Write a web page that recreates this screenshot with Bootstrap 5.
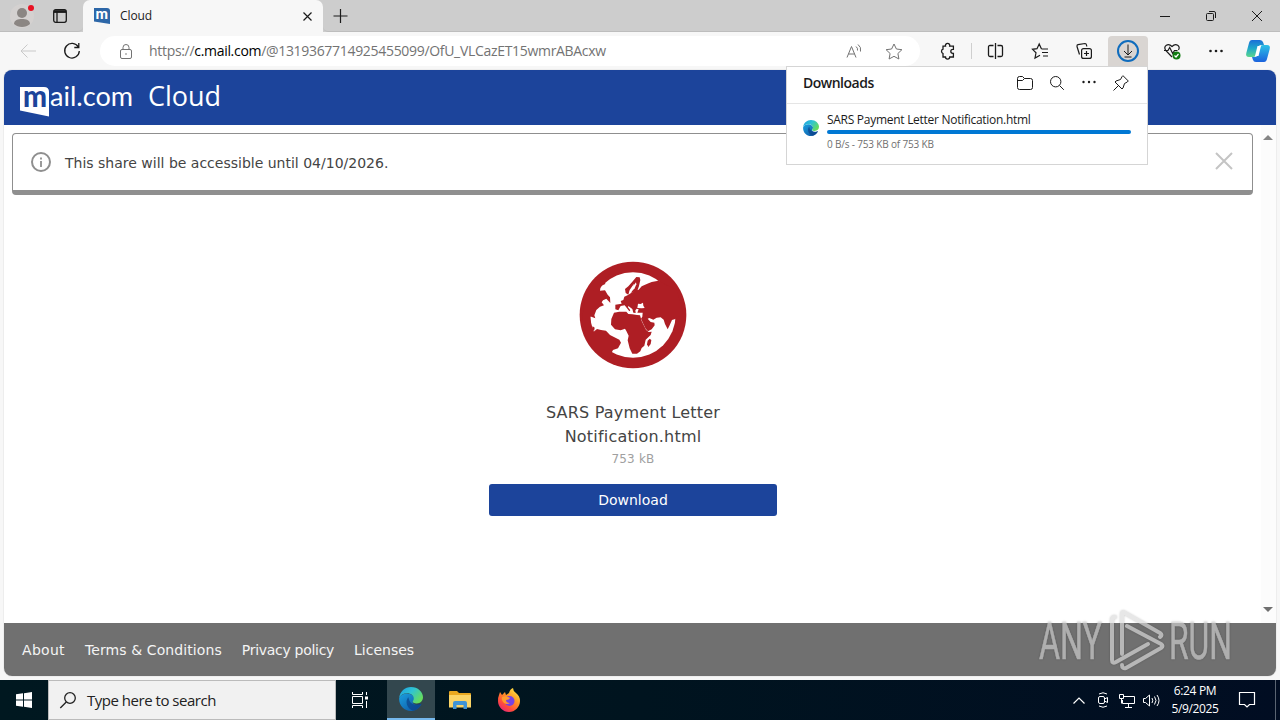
<!DOCTYPE html>
<html lang="en">
<head>
  <meta charset="UTF-8">
  <title>Cloud</title>
  <link href="https://cdn.jsdelivr.net/npm/bootstrap@5.3.0/dist/css/bootstrap.min.css" rel="stylesheet">
  <style>
    body { width: 1280px; height: 720px; overflow: hidden; background: #f7f7f7; color: #1b1b1b; font-family: "Open Sans", "Noto Sans", sans-serif; font-size: 12px; line-height: 16px; }
    svg { display: block; flex: none; overflow: visible; fill: none; stroke: currentColor; }
    .cell { display: flex; align-items: center; justify-content: center; flex: none; }

    .tab-strip { height: 32px; background: #cdcdcd; }
    .tab-left { width: 83px; border-bottom-right-radius: 5px; border-bottom: 1px solid #bdbdbd; }
    .profile { width: 44px; }
    .tab-menu { width: 32px; }
    .tab-active { width: 240px; background: #f7f7f7; border-radius: 7px 7px 0 0; padding: 0 11px; }
    .tab-name { margin-left: 10px; letter-spacing: -.1px; }
    .tab-right { border-bottom: 1px solid #bdbdbd; border-bottom-left-radius: 5px; }
    .w-btn { width: 46px; }

    .toolbar { height: 38px; }
    .t-btn { width: 48px; height: 30px; margin-right: 4px; }
    .t-back { width: 40px; margin: 0 0 0 8px; color: #c9c9c9; }
    .address { width: 820px; height: 30px; border-radius: 15px; background: #fff; color: #737373; font-size: 14px; }
    .address b { font-weight: 400; color: #000; }
    .url { letter-spacing: -.31px; margin-left: 17px; }
    .lock { margin-left: 20px; }
    .a-btn { width: 40px; }
    .a-star { margin-right: 6px; }
    .t-icons { margin-left: 8px; }
    .t-icon { width: 40px; height: 30px; margin-right: 4px; border-radius: 4px 4px 0 0; }
    .t-sep { width: 1px; height: 16px; background: #cfcfcf; margin: 0 4px 0 -1px; }
    .t-on { background: #d9d5d2; }
    .copilot { width: 36px; }

    .page-view { width: 1272px; height: 606px; margin-left: 4px; border-radius: 8px; background: #fff; overflow: hidden; font-family: "DejaVu Sans", sans-serif; box-shadow: 0 0 1px #999; }
    .mail-head { height: 55px; background: #1c449b; color: #fff; padding-left: 16px; }
    .mail-title { font: 27px/34px "Open Sans", sans-serif; margin-left: 15px; margin-top: -3px; }
    .share-note { width: 1241px; height: 62px; margin: 8px 0 0 8px; border: 1px solid #8f8f8f; border-bottom-width: 5px; border-radius: 4px; padding: 0 19px 0 18px; font-size: 14px; color: #444; }
    .note-text { margin-left: 14px; padding-top: 2px; }
    .file-box { width: 288px; margin: 66px 0 0 485px; }
    .file-name { font-size: 16px; line-height: 24px; color: #444; margin-top: 32px; letter-spacing: .2px; }
    .file-size { font-size: 12px; line-height: 21px; color: #a0a0a0; letter-spacing: .2px; }
    .btn-dl { height: 32px; margin-top: 14px; padding: 0; border-radius: 3px; background: #1c449b; color: #fff; font-size: 14px; line-height: 32px; }
    .scroller { width: 15px; background: #fcfcfc; padding: 10px 1px 11px 0; }
    .mail-foot { height: 53px; background: #707070; color: #f4f4f4; font-size: 14px; padding-left: 18px; gap: 20px; }
    .f-about { letter-spacing: .3px; }
    .f-wide { letter-spacing: .1px; }
    .f-tight { letter-spacing: -.3px; }

    .dl-panel { position: absolute; left: 786px; top: 66px; width: 362px; height: 99px; background: #fff; border: 1px solid #d5d5d5; }
    .dl-head { height: 37px; padding: 0 10px 4px 16px; border-bottom: 1px solid #e5e5e5; }
    .dl-title { font-size: 14px; font-weight: 600; letter-spacing: -.5px; }
    .dl-btn { width: 32px; }
    .dl-item { padding: 8px 16px 0; gap: 8px; }
    .dl-logo { margin-top: 8px; }
    .dl-name { letter-spacing: -.28px; }
    .dl-bar { height: 4px; border-radius: 2px; background: #0078d4; margin-top: 2px; }
    .dl-speed { font-size: 10px; color: #707070; margin-top: 2px; letter-spacing: -.17px; }
    .watermark { position: absolute; left: 1036px; top: 606px; opacity: .66; filter: drop-shadow(0 0 1px rgba(0, 0, 0, .3)); }

    .task-row { height: 40px; margin-top: 4px; background: linear-gradient(90deg, #001820, #00141f 50%, #010d22); color: #fff; }
    .task-btn { width: 48px; height: 40px; }
    .search-box { width: 288px; height: 40px; background: #f1f1f1; border: 1px solid #bbb; color: #222; font-size: 15px; padding-left: 11px; gap: 11px; letter-spacing: -.48px; }
    .edge-on { background: #33474e; border-bottom: 2px solid #76b9ed; margin: 0 1px 0 3px; }
    .tray { width: 24px; }
    .clock { width: 64px; line-height: 18px; letter-spacing: -.35px; }
    .notify { width: 40px; }
    .peek { width: 5px; border-left: 1px solid #5a6472; height: 40px; }
  </style>
</head>
<body>
  <svg width="0" height="0" class="position-absolute">
    <defs>
      <linearGradient id="gBlue" x1="0" y1="0" x2="1" y2="1"><stop offset="0" stop-color="#1ba0e0"/><stop offset="1" stop-color="#0c4f9e"/></linearGradient>
      <linearGradient id="gGreen" x1="0" y1="0" x2="1" y2=".6"><stop offset="0" stop-color="#1b9de2"/><stop offset=".5" stop-color="#2fc3d4"/><stop offset="1" stop-color="#66dd5c"/></linearGradient>
      <linearGradient id="gFox" x1=".9" y1="0" x2=".2" y2="1"><stop offset="0" stop-color="#fff04a"/><stop offset=".4" stop-color="#ff9a25"/><stop offset=".75" stop-color="#ff4a3c"/><stop offset="1" stop-color="#e3237f"/></linearGradient>
      <linearGradient id="gCo1" x1="0" y1="0" x2="0" y2="1"><stop offset="0" stop-color="#1b6fd8"/><stop offset=".5" stop-color="#20a9c9"/><stop offset="1" stop-color="#5bd68c"/></linearGradient>
      <linearGradient id="gCo2" x1="0" y1="0" x2="0" y2="1"><stop offset="0" stop-color="#2cc1e6"/><stop offset="1" stop-color="#1b62dd"/></linearGradient>
      <symbol id="edge" viewBox="0 0 24 24">
        <path stroke="none" fill="url(#gBlue)" d="M.2 11C2 7 7 5.500 11 7c3 1 4.500 3 4 5.500-.3 1-1.300 1.500-1.300 2.500 0 2.500 4.500 4 8.800 1.900C20.500 21 16.500 24 12 24 5 24-.5 18 .2 11z"/>
        <path stroke="none" fill="url(#gGreen)" d="M.2 11C.8 4.500 6 0 12 0c7 0 12 5 12 10.300 0 3.700-2.800 6.200-6.200 6.200-3 0-4.300-1-4.100-1.900.2-.8 1.100-1.300 1.100-3C14.800 8.500 12 6.300 8 6.300 4.500 6.300 1.500 8 .2 11z"/>
        <path stroke="none" fill="#0c4289" fill-opacity=".7" d="M9.500 10.200C6 13 7 21 14 23.700c3.500-.6 6.500-3 8.300-6.400.3-.7-.2-.8-.7-.5-5 2-11.500.5-12.100-6.600z"/>
      </symbol>
    </defs>
  </svg>

  <!-- Tab strip -->
  <div class="tab-strip d-flex">
    <div class="tab-left d-flex align-items-center">
      <div class="cell profile">
        <svg width="24" height="24"><g stroke="none"><circle cx="12" cy="12" r="12" fill="#d4d1d0"/><circle cx="12" cy="9" r="5" fill="#8b8683"/><path d="M4 20c0-4 4-5 8-5s8 1 8 5c-4 4-12 4-16 0z" fill="#8b8683"/><circle cx="21" cy="4" r="3" fill="#e81123"/></g></svg>
      </div>
      <div class="cell tab-menu">
        <svg width="14" height="14" stroke-width="1.300"><rect x=".7" y=".7" width="12.600" height="12.600" rx="2"/><path d="M1 3h12M4 3v10"/><path d="M1 2.400h12" stroke-width="2.500"/></svg>
      </div>
    </div>
    <div class="tab-active d-flex align-items-center">
      <svg width="16" height="16"><path d="M0 0h13q3 0 3 3v13L0 13.500z" fill="#2d67a8" stroke="none"/><text x="1.500" y="11" font-family="Lato" font-weight="900" font-size="14.500" textLength="12.500" lengthAdjust="spacingAndGlyphs" fill="#fff" stroke="none">m</text></svg>
      <span class="tab-name me-auto">Cloud</span>
      <svg width="9" height="9" stroke-width="1.200"><path d="M.5.5l8 8m0-8l-8 8"/></svg>
    </div>
    <div class="tab-right d-flex align-items-center flex-grow-1">
      <svg width="14" height="14" class="ms-2 me-auto" stroke-width="1.200"><path d="M9.500 0v14M2.500 7h14"/></svg>
      <div class="cell w-btn"><svg width="10" height="10"><path d="M0 5.500h10"/></svg></div>
      <div class="cell w-btn"><svg width="10" height="10"><rect x=".5" y="2.500" width="7" height="7" rx="1"/><path d="M3 .5h5q1.500 0 1.500 1.500v5"/></svg></div>
      <div class="cell w-btn"><svg width="10" height="10"><path d="M0 0l10 10M10 0L0 10"/></svg></div>
    </div>
  </div>

  <!-- Toolbar -->
  <div class="toolbar d-flex align-items-center">
    <div class="cell t-btn t-back"><svg width="16" height="14"><path d="M16 7H1M7.500 .5L1 7l6.500 6.500"/></svg></div>
    <div class="cell t-btn"><svg width="16" height="16" stroke-width="1.300"><path d="M14.300 4A7.300 7.300 0 1 0 15.300 8M14.800 0v4.500h-4.500"/></svg></div>
    <div class="address d-flex align-items-center">
      <svg width="12" height="15" class="lock"><rect x=".5" y="5.500" width="11" height="9" rx="1.500"/><path d="M3 5.500V3.500a3 3 0 0 1 6 0v2"/><circle cx="6" cy="10" r=".8" fill="currentColor" stroke="none"/></svg>
      <span class="url me-auto">https://<b>c.mail.com</b>/@1319367714925455099/OfU_VLCazET15wmrABAcxw</span>
      <div class="cell a-btn"><svg width="16" height="14"><path d="M1 13.500L5.500 2.500 10 13.500M2.500 10h6M10 2.500q2 1.500 1.500 4M12 .5q3.500 2.500 2.500 7"/></svg></div>
      <div class="cell a-btn a-star"><svg width="18" height="17"><path d="M9 1l2.400 5 5.500.7-4 3.800 1 5.500L9 13.300 4.100 16l1-5.500-4-3.800 5.500-.7z"/></svg></div>
    </div>
    <div class="t-icons d-flex align-items-center">
      <div class="t-icon cell"><svg width="16" height="16" stroke-width="1.300"><path d="M3 3.200h2.500a2.200 2.200 0 1 1 4.200 0H13.400V6.300H12.800a2 2 0 1 0 0 4h.6V14H9.700a2 2 0 0 1-4.200 0H3V10.500A2.300 2.300 0 0 1 3 6.200z"/></svg></div>
      <div class="t-sep"></div>
      <div class="t-icon cell"><svg width="16" height="16" stroke-width="1.300"><path d="M7.500 0v16M5.500 2.500H2Q.5 2.500 .5 4v8q0 1.500 1.500 1.500H5.500M9.500 2.500H13Q14.500 2.500 14.500 4v8q0 1.500-1.500 1.500H9.500"/></svg></div>
      <div class="t-icon cell"><svg width="16" height="16" stroke-width="1.200"><path d="M9.500 6L7.200 1 5 5.700.5 6.300 4 9.800l-1 5.200 5-2.700M9.500 6H16M10 9.500h6M11 13h5"/></svg></div>
      <div class="t-icon cell"><svg width="16" height="16" stroke-width="1.200"><rect x="5.600" y="5.600" width="9.800" height="9.800" rx="2"/><path d="M10.500 8v5M8 10.500h5M3.500 11.500L1 3.500Q.7 2 2 1.700L9 .5q1.300 0 1.500 1.500l.3 1.500"/></svg></div>
      <div class="t-icon cell t-on"><svg width="22" height="22"><circle cx="11" cy="11" r="10" stroke="#0f6cbd" stroke-width="2"/><path d="M11 4.500v10M7 11l4 4 4-4M7.500 17h7"/></svg></div>
      <div class="t-icon cell"><svg width="16" height="16" stroke-width="1.200"><path d="M8 14L1.700 7.500C-1 3 4-.5 8 3.500 12-.5 17 3 14.500 7M0 7.500h4l1.700-3 3 6 1.800-3h3"/><circle cx="12.500" cy="12.500" r="4" fill="#107c10" stroke="none"/><path d="M10.500 12.500l1.500 1.500 2.500-3" stroke="#fff"/></svg></div>
      <div class="t-icon cell"><svg width="14" height="4"><g fill="currentColor" stroke="none"><circle cx="1.500" cy="2" r="1.300"/><circle cx="7" cy="2" r="1.300"/><circle cx="12.500" cy="2" r="1.300"/></g></svg></div>
      <div class="cell copilot"><svg width="24" height="22"><g stroke="none"><path d="M6 0h8q2.500 0 3.200 2.500L18 5h-3q-2 0-2.600 2L10 15q-.8 2-3 2H3Q-.7 17 .3 13L3 3q.7-3 3-3z" fill="url(#gCo1)"/><path d="M18 22h-8q-2.500 0-3.200-2.500L6 17h3q2 0 2.600-2L14 7q.8-2 3-2h4q3.700 0 2.700 4L21 19q-.7 3-3 3z" fill="url(#gCo2)"/><path d="M11.500 6h3.500L12.500 16H9z" fill="#fff"/></g></svg></div>
    </div>
  </div>

  <!-- Web page -->
  <div class="page-view d-flex flex-column">
    <div class="mail-head d-flex align-items-center">
      <svg width="113" height="26">
        <path d="M0 2h24q5 0 5 5v24.500L0 25.500z" fill="#fff" stroke="none"/>
        <text x="3" y="22" font-family="Lato" font-weight="900" font-size="30" textLength="24" lengthAdjust="spacingAndGlyphs" fill="#1c449b" stroke="none">m</text>
        <text x="30" y="21" font-family="Lato" font-size="26" textLength="83" lengthAdjust="spacingAndGlyphs" fill="#fff" stroke="none">ail.com</text>
      </svg>
      <div class="mail-title">Cloud</div>
    </div>
    <div class="d-flex flex-grow-1">
      <div class="flex-grow-1">
        <div class="share-note d-flex align-items-center">
          <svg width="20" height="20"><circle cx="10" cy="10" r="9" stroke="#8f8f8f" stroke-width="2"/><path d="M10 9v6M10 5.500v2" stroke="#8f8f8f" stroke-width="1.800"/></svg>
          <span class="note-text me-auto">This share will be accessible until 04/10/2026.</span>
          <svg width="18" height="20"><path d="M1 1l16 16M17 1L1 17" stroke="#c4c4c4" stroke-width="2"/></svg>
        </div>
        <div class="file-box text-center">
          <svg width="108" height="108" viewBox="57 33 324 324" class="mx-auto">
            <g stroke="none" fill="#ae1e24">
              <circle cx="219" cy="195" r="160"/>
              <circle cx="219" cy="195" r="128" fill="#fff"/>
              <!-- Americas -->
              <path d="M150 70L134 94l2 8-14 6-2 14 15-1 8 13 7 8 1 17-12-13-10 5-4 6 7 9-12 4-11 10-6 16 3 9-12-5-6 0 1 14-2 8 9 15 5 8 10-8 12 3 15 2 12 13 28 14 5 9-9 17-15 5-5 10 10 3-4 16-60-30-36-70 10-80z"/>
              <path d="M98 229l6 4-2 11-6-8z"/>
              <!-- Europe and Asia -->
              <path d="M295 92L275 96 262 101 245 109 236 119 224 122 212 130 204 135 193 140 190 150 182 153 185 161 166 164 166 178 175 181 182 168 194 166 201 175 208 184 211 181 204 172 205 168 217 177 220 188 227 189 226 181 230 176 236 178 232 188 248 188 247 200 243 206 249 220 257 236 264 244 275 238 284 226 283 218 272 216 263 206 268 204 280 209 290 203 302 202 311 209 315 222 323 238 329 226 336 210 346 207 370 190 350 120z"/>
              <path d="M239 82l-10-1-12 14-12 14-10 8 2 12 8 5 4-14 13-19-2 14-8 13 20-6 5-14 4-18z"/>
              <path d="M228 97l-11 15-9 15 3 2 13-14 5-12z" fill="#fff"/>
              <path d="M234 161l8 1 7-4 1 9 4 7-9 1-13-1z" fill="#fff"/>
              <!-- Africa -->
              <path d="M162 188l16-3 21 0 6 7 12 1 14 2 9 1 5 17 13 26 8 7 9-1-3 10-15 14-4 18-8 7-4 10-10 7-14 0-8-16-6-24 3-14-7-14-4-7-13 5-17-3-12-14 1-17z"/>
              <path d="M269 266l5 4-2 12-7 9-4-8 2-11z"/>
            </g>
          </svg>
          <div class="file-name">SARS Payment Letter<br>Notification.html</div>
          <div class="file-size">753 kB</div>
          <button class="btn btn-dl w-100 d-block border-0">Download</button>
        </div>
      </div>
      <div class="scroller d-flex flex-column align-items-center justify-content-between">
        <svg width="10" height="5"><path d="M0 5l5-5 5 5z" fill="#858585" stroke="none"/></svg>
        <svg width="10" height="5"><path d="M0 0l5 5 5-5z" fill="#707070" stroke="none"/></svg>
      </div>
    </div>
    <div class="mail-foot d-flex align-items-center">
      <span class="f-about">About</span><span class="f-wide">Terms &amp; Conditions</span><span class="f-tight">Privacy policy</span><span>Licenses</span>
    </div>
  </div>

  <!-- Taskbar -->
  <div class="task-row d-flex align-items-center">
    <div class="cell task-btn"><svg width="16" height="16"><path d="M0 2.300l7-1v6.200H0zM8 1.200L16 0v7.500H8zM0 8.500h7v6.200l-7-1zM8 8.500h8V16l-8-1.200z" fill="#fff" stroke="none"/></svg></div>
    <div class="search-box d-flex align-items-center">
      <svg width="16" height="16" stroke-width="1.300"><circle cx="10" cy="6" r="5.300"/><path d="M6.300 10L.3 16"/></svg>
      <span>Type here to search</span>
    </div>
    <div class="cell task-btn"><svg width="16" height="16"><path d="M.5 0v2.500h10V0M.5 16v-2.500h10V16M.5 4.500h10v7H.5zM14.500 0v3M14.500 9v7"/><path d="M13 4.500h3v3h-3z" fill="#fff" stroke="none"/></svg></div>
    <div class="cell task-btn edge-on"><svg width="24" height="24"><use href="#edge"/></svg></div>
    <div class="cell task-btn"><svg width="22" height="20"><g stroke="none"><path d="M0 2q0-1 1-1h7l2 2h11q1 0 1 1v13H0z" fill="#e9a820"/><path d="M0 5h22v12.500H0z" fill="#fbd466"/><path d="M4 19v-6q0-2 2-2h10q2 0 2 2v6h-3.500v-4h-7v4z" fill="#3f94d6"/></g></svg></div>
    <div class="cell task-btn"><svg width="22" height="24"><g stroke="none"><path d="M3 4l2 3 3-3 1 3 3-2q1-4 4-5 0 3 3 5 4 3 4 8c0 6-5 11-11 11S1 19 1 13q0-4 1-6z" fill="url(#gFox)"/><circle cx="12.500" cy="13" r="5" fill="#7542e5"/><path d="M5 9q4-2 8 1-1 2-4 2 0 3 4 3-3 2-6 0-3-3-2-6z" fill="#ff9b2e"/></g></svg></div>
    <div class="ms-auto d-flex align-items-center">
      <div class="cell tray"><svg width="12" height="7"><path d="M.5 6.500L6 1l5.500 5.500" stroke-width="1.200"/></svg></div>
      <div class="cell tray"><svg width="12" height="16"><rect x="1.500" y="4.500" width="6" height="7" rx="1.500"/><path d="M7.500 7l3-1.500v5l-3-1.500M2 2Q6-.5 10 2M2 14q4 2.500 8 0"/></svg></div>
      <div class="cell tray"><svg width="16" height="15"><path d="M5 3.500h10.500v7H3.500V7M9.500 10.500v4M6 14.500h7M.5 1.500h4v4h-4zM2.500 5.500v5"/></svg></div>
      <div class="cell tray"><svg width="17" height="13"><path d="M.5 4.500h2l4-3.500v11l-4-3.500h-2zM9 4q1.500 2.500 0 5M11.500 2.500q3 4 0 8M14 1q4 5.500 0 11"/></svg></div>
      <div class="clock text-center">6:24 PM<br>5/9/2025</div>
      <div class="cell notify"><svg width="16" height="16"><path d="M.5.500h15v12h-5L8 15l-2.500-2.500h-5z" stroke-width="1.200"/></svg></div>
      <div class="peek ms-2"></div>
    </div>
  </div>

  <!-- Downloads flyout -->
  <div class="dl-panel">
    <div class="dl-head d-flex align-items-center">
      <span class="dl-title me-auto">Downloads</span>
      <div class="cell dl-btn"><svg width="16" height="14"><path d="M.5 11.500v-9q0-2 2-2h3l2 2h6q2 0 2 2v7q0 2-2 2h-11q-2 0-2-2zM.5 4.500h5l2-2"/></svg></div>
      <div class="cell dl-btn"><svg width="14" height="14"><circle cx="5.700" cy="5.700" r="5.200"/><path d="M9.500 9.500l4.300 4.300"/></svg></div>
      <div class="cell dl-btn"><svg width="14" height="4"><g fill="currentColor" stroke="none"><circle cx="1.500" cy="1" r="1.200"/><circle cx="7" cy="1" r="1.200"/><circle cx="12.500" cy="1" r="1.200"/></g></svg></div>
      <div class="cell dl-btn"><svg width="16" height="16"><path d="M10 .7L15.300 6l-1 1-2.800 1.500-1.500 4.500-1 1L2 7l1-1 4.500-1.500L9 1.700zM5.500 10.500L.5 15.500"/></svg></div>
    </div>
    <div class="dl-item d-flex align-items-start">
      <svg width="16" height="16" class="dl-logo"><use href="#edge"/></svg>
      <div class="flex-grow-1">
        <div class="dl-name">SARS Payment Letter Notification.html</div>
        <div class="dl-bar"></div>
        <div class="dl-speed">0 B/s - 753 KB of 753 KB</div>
      </div>
    </div>
  </div>

  <!-- Watermark -->
  <svg class="watermark" width="200" height="70" font-family="Roboto" font-size="51">
    <g fill="#d0d0d0" stroke="#d0d0d0" stroke-width=".6">
      <text x="3" y="53" textLength="63" lengthAdjust="spacingAndGlyphs">ANY</text>
      <text x="133" y="53" textLength="63" lengthAdjust="spacingAndGlyphs">RUN</text>
    </g>
    <g stroke="#dcdcdc" stroke-width="4" stroke-linejoin="round" stroke-linecap="round">
      <path d="M86 48V8q0-3 3-1l35 20q3 2 0 4M91 20l34 18q3 2 0 4L90 62q-4 1-4-3"/>
      <path d="M79 11q-3 0-3 3v40q0 4 4 2l32-18"/>
    </g>
  </svg>

  <script src="https://cdn.jsdelivr.net/npm/bootstrap@5.3.0/dist/js/bootstrap.bundle.min.js"></script>
</body>
</html>
